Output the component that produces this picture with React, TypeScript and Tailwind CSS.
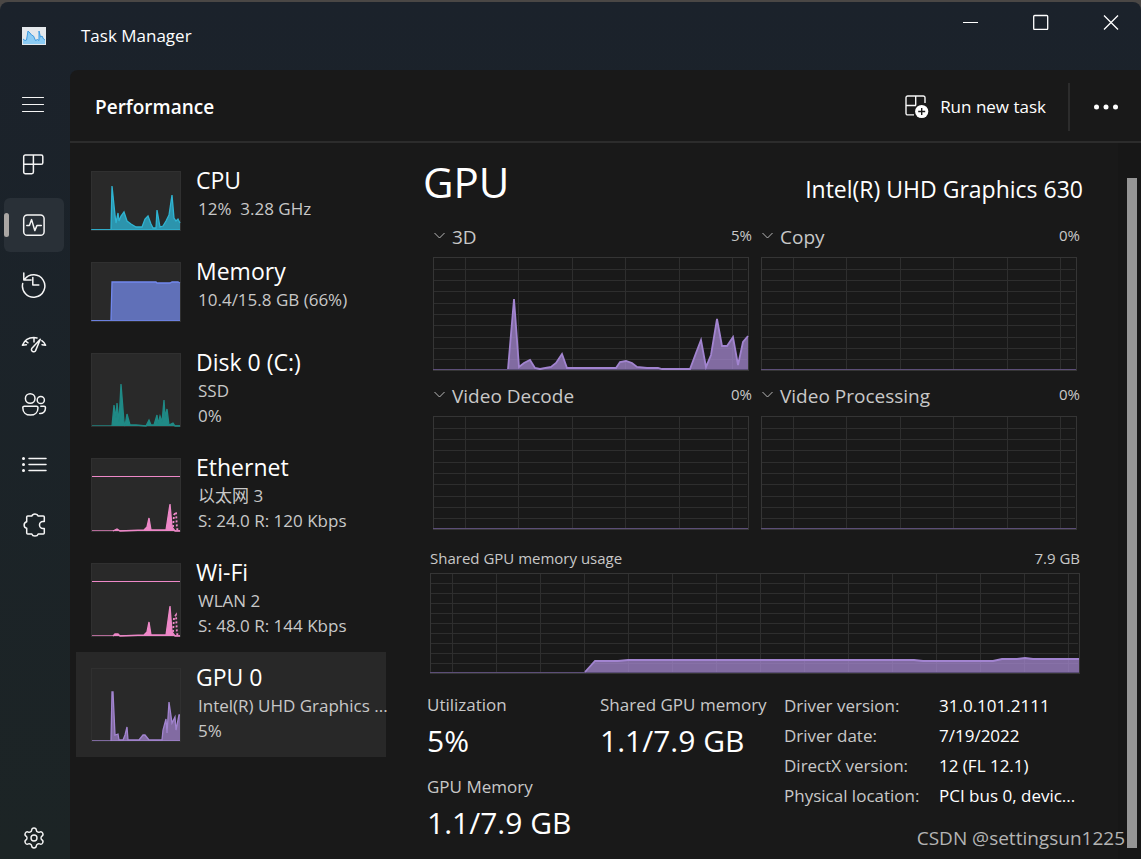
import React from 'react';
import { Settings } from 'lucide-react';

type Point = [number, number];

interface Resource {
  name: string;
  lines: string[];
  height: number;
  stroke: string;
  fill: string;
  points: Point[];
  dotted?: string;
  limit?: number;
}

const resources: Resource[] = [
  {
    name: 'CPU',
    lines: ['12%  3.28 GHz'],
    height: 60,
    stroke: '#2fb4d2',
    fill: '#2c94ad',
    points: [[0, 58], [20, 58], [21, 15], [24, 44], [25, 52], [27, 42], [28, 50], [30, 45], [33, 41], [36, 50], [40, 53], [45, 56], [51, 56], [54, 48], [57, 45], [60, 53], [62, 57], [65, 57], [66, 39], [69, 56], [72, 55], [75, 50], [78, 44], [81, 24], [83, 47], [85, 50], [87, 48], [89, 52]],
  },
  {
    name: 'Memory',
    lines: ['10.4/15.8 GB (66%)'],
    height: 60,
    stroke: '#7288ee',
    fill: '#6070b8',
    points: [[0, 58], [20, 58], [21, 20], [65, 20], [66, 21], [79, 21], [81, 20], [87, 20], [89, 21]],
  },
  {
    name: 'Disk 0 (C:)',
    lines: ['SSD', '0%'],
    height: 74,
    stroke: '#1f8a86',
    fill: '#208a86',
    points: [[0, 73], [21, 73], [23, 52], [25, 65], [26, 50], [28, 69], [30, 31], [33, 69], [34, 73], [36, 61], [39, 72], [45, 72], [55, 73], [58, 67], [60, 72], [63, 72], [66, 62], [67, 71], [69, 63], [71, 69], [73, 47], [74, 64], [76, 56], [78, 72], [82, 70], [84, 73], [89, 73]],
  },
  {
    name: 'Ethernet',
    lines: ['以太网 3', 'S: 24.0 R: 120 Kbps'],
    height: 74,
    stroke: '#ee88c8',
    fill: '#ee88c8',
    limit: 18,
    points: [[0, 73], [22, 73], [26, 71], [29, 73], [53, 72], [56, 69], [58, 60], [60, 72], [75, 72], [79, 46], [81, 69], [84, 73], [89, 73]],
    dotted: '82,69 83,57 85,54 86,71 88,72',
  },
  {
    name: 'Wi-Fi',
    lines: ['WLAN 2', 'S: 48.0 R: 144 Kbps'],
    height: 74,
    stroke: '#ee88c8',
    fill: '#ee88c8',
    limit: 18,
    points: [[0, 73], [22, 73], [24, 71], [27, 71], [29, 73], [53, 72], [56, 69], [58, 59], [60, 72], [75, 72], [79, 43], [81, 69], [84, 73], [89, 73]],
    dotted: '82,69 83,55 85,52 86,71 88,72',
  },
  {
    name: 'GPU 0',
    lines: ['Intel(R) UHD Graphics ...', '5%'],
    height: 74,
    stroke: '#a284d0',
    fill: '#826ba2',
    points: [[0, 73], [20, 73], [21, 24], [22, 24], [24, 67], [27, 66], [28, 72], [32, 72], [34, 67], [36, 59], [37, 72], [48, 72], [52, 67], [54, 67], [58, 72], [71, 72], [72, 62], [75, 51], [76, 65], [78, 34], [81, 55], [84, 49], [85, 62], [88, 47], [89, 47]],
  },
];

const gpu3d: Point[] = [[0, 112], [75, 112], [81, 42], [86, 110], [91, 106], [97, 103], [102, 111], [107, 112], [118, 110], [123, 106], [129, 97], [134, 111], [183, 111], [187, 105], [193, 104], [199, 106], [204, 110], [214, 111], [225, 111], [229, 112], [257, 112], [263, 96], [268, 83], [273, 110], [278, 98], [284, 62], [289, 89], [294, 89], [300, 80], [305, 108], [310, 85], [315, 79]];
const idle: Point[] = [[0, 112], [315, 112]];
const sharedMemory: Point[] = [[0, 99], [155, 99], [165, 88], [188, 88], [198, 87], [484, 87], [493, 88], [563, 88], [572, 86], [587, 86], [595, 85], [603, 86], [649, 86]];

const engines = [
  { name: '3D', value: '5%', points: gpu3d },
  { name: 'Copy', value: '0%', points: idle },
  { name: 'Video Decode', value: '0%', points: idle },
  { name: 'Video Processing', value: '0%', points: idle },
];

const engineCols = [32, 85, 139, 192, 246, 299];
const engineRows = [12, 23, 34, 46, 57, 68, 80, 91, 102];
const memoryCols = [22, 66, 110, 154, 198, 242, 286, 330, 374, 418, 462, 506, 550, 594, 638];
const memoryRows = [10, 20, 30, 40, 50, 60, 70, 80, 90];

const driver = [
  ['Driver version:', '31.0.101.2111'],
  ['Driver date:', '7/19/2022'],
  ['DirectX version:', '12 (FL 12.1)'],
  ['Physical location:', 'PCI bus 0, devic...'],
];

const areaOf = (points: Point[], bottom: number) => {
  const last = points[points.length - 1];
  return `${points.map((p) => p.join(',')).join(' ')} ${last[0]},${bottom} 0,${bottom}`;
};

interface UsageChartProps {
  label: string;
  width: number;
  height: number;
  cols: number[];
  rows: number[];
  points: Point[];
  className: string;
}

const UsageChart: React.FC<UsageChartProps> = ({ label, width, height, cols, rows, points, className }) => (
  <svg className={className} viewBox={`0 0 ${width} ${height}`} preserveAspectRatio="none" role="img" aria-label={label}>
    <g stroke="#2e2e2e" fill="none">
      {cols.map((x) => <path key={`c${x}`} d={`M${x + 0.5} 0V${height}`} />)}
      {rows.map((y) => <path key={`r${y}`} d={`M0 ${y + 0.5}H${width - 2}`} />)}
      <rect x="0.5" y="0.5" width={width - 1} height={height - 1} stroke="#353535" />
    </g>
    <polygon points={areaOf(points, height - 1)} fill="#a98ad4" fillOpacity="0.73" />
    <path d={`M0 ${height - 1.5}H${width - 1}`} stroke="#5c4e78" fill="none" />
    {points.length > 2 && (
      <polyline points={points.slice(1).map((p) => p.join(',')).join(' ')} fill="none" stroke="#a284d0" strokeWidth="1.8" />
    )}
  </svg>
);

const Thumbnail: React.FC<{ item: Resource }> = ({ item }) => (
  <svg className="mt-4 mb-[15px] shrink-0" width="90" height={item.height} viewBox={`0 0 90 ${item.height}`} aria-hidden="true">
    <rect x="0.5" y="0.5" width="89" height={item.height - 1} fill="#292929" stroke="#303030" />
    {item.limit && <path d={`M1 ${item.limit + 0.5}H89`} stroke={item.stroke} />}
    <polygon points={areaOf(item.points, item.height - 1)} fill={item.fill} />
    <polyline points={item.points.slice(1).map((p) => p.join(',')).join(' ')} fill="none" stroke={item.stroke} strokeWidth="1.3" />
    <path d={`M1 ${item.height - 1.5}H89`} stroke={item.stroke} strokeOpacity="0.7" />
    {item.dotted && <polyline points={item.dotted} fill="none" stroke={item.stroke} strokeWidth="1.8" strokeDasharray="2 2" />}
  </svg>
);

const Icon: React.FC<{ children: React.ReactNode }> = ({ children }) => (
  <svg width="26" height="26" viewBox="0 0 26 26" fill="none" stroke="#f5f5f5" strokeWidth="1.5" strokeLinecap="round" strokeLinejoin="round" aria-hidden="true">
    {children}
  </svg>
);

const navItems = [
  { label: 'Open navigation', icon: <Icon><path strokeWidth="1.2" d="M1.5 5.5h21M1.5 12.5h21M1.5 19.500h21" /></Icon> },
  { label: 'Processes', icon: <Icon><path d="M4.3 3h15.9a1.6 1.6 0 0 1 1.6 1.6v6.100a1.6 1.6 0 0 1-1.6 1.6h-7.8v7.800a1.6 1.6 0 0 1-1.6 1.6H4.3a1.6 1.6 0 0 1-1.6-1.6V4.600A1.6 1.6 0 0 1 4.3 3zM12.4 3v9.300M2.7 12.300h9.700" /></Icon> },
  { label: 'Performance', icon: <Icon><rect x="2.7" y="2.9" width="20.4" height="20.4" rx="3.6" /><path d="M5.8 13.6h2.6l2.2-6 3.2 11 2.1-5h4.4" /></Icon> },
  { label: 'App history', icon: <Icon><path d="M2.8 1v7h7.3M3.6 7.4A11.2 11.2 0 1 1 1.7 11.6M11.8 5.500v7.400h6" /></Icon> },
  { label: 'Startup apps', icon: <Icon><path d="M1.4 13.2C3.6 8.2 8 5.6 12.8 5.6c1.2 0 2.2.1 3.2.4M20.8 8.6c1.8 1.2 3 2.8 3.8 4.6M1.4 13.2l4-.4M24.6 13.2l-3.6-.5M5 9.4l2 1.4M13 6v4" /><path d="M19.3 7.2 14.7 18.4a2.2 2.2 0 1 1-4-1.8z" /></Icon> },
  { label: 'Users', icon: <Icon><circle cx="9.2" cy="6.5" r="4.8" /><circle cx="19.8" cy="8" r="3.6" /><path d="M3.3 14.2h12.2a1.5 1.5 0 0 1 1.5 1.5c0 4.6-3.2 7.4-7.6 7.4s-7.6-2.8-7.6-7.4a1.5 1.5 0 0 1 1.5-1.5zM19.8 14.2h3.2a1.5 1.5 0 0 1 1.5 1.5c0 4-2.6 6-5.8 5.8" /></Icon> },
  { label: 'Details', icon: <Icon><path d="M8 6.5h17M8 12.5h17M8 18.5h17" /><path strokeWidth="3" d="M2.5 6.5h.01M2.5 12.5h.01M2.5 18.5h.01" /></Icon> },
  { label: 'Services', icon: <Icon><path d="M6.7 4h4.1a3.3 2.7 0 0 1 6.4 0h5.1a1 1 0 0 1 1 1v4.6h-1.4a3.4 3.4 0 0 0 0 6.8h1.4V21a1 1 0 0 1-1 1h-5.1a3.3 2.7 0 0 1-6.4 0H6.7a1 1 0 0 1-1-1v-4.7a3.4 3.4 0 0 1 0-6.6V5a1 1 0 0 1 1-1z" /></Icon> },
];

const Sidebar = () => (
  <nav className="flex w-[70px] shrink-0 flex-col gap-1.5 pt-2 pl-1" aria-label="Pages">
    {navItems.map((item) =>
      item.label === 'Performance' ? (
        <button key={item.label} type="button" aria-label={item.label} aria-current="page" className="relative flex h-[54px] w-[60px] items-center justify-center rounded-md bg-[#293037]">
          <span className="absolute top-[15px] left-0 h-6 w-[5px] rounded-full bg-[#aaa6a3]" />
          {item.icon}
        </button>
      ) : (
        <button key={item.label} type="button" aria-label={item.label} className="flex h-[54px] w-[60px] items-center justify-center rounded-md">
          {item.icon}
        </button>
      )
    )}
    <button type="button" aria-label="Settings" className="mt-auto flex h-[42px] w-[60px] items-center justify-center text-[#f5f5f5]">
      <Settings size={24} strokeWidth={1.4} />
    </button>
  </nav>
);

const TitleBar = () => (
  <header className="flex h-[68px] shrink-0 justify-between pr-[22px] pl-[22px]">
    <div className="flex items-center gap-[35px]">
      <svg width="24" height="18" viewBox="0 0 24 18" aria-hidden="true">
        <rect width="24" height="18" fill="#e4e8ec" />
        <path d="M1 17v-5l2 1.5 1.500-.5L6 4l2 2 1.500 2 2 1 2 4.500 2-1 1.500 1L17 4l1.500 6 1.500-1 1.500 3 1.500 1v4z" fill="#8ccbf3" />
        <path d="M1 12l2 1.500 1.500-.5L6 4l2 2 1.500 2 2 1 2 4.500 2-1 1.500 1L17 4l1.500 6 1.500-1 1.500 3 1.500 1" fill="none" stroke="#3c9be2" />
      </svg>
      <h1 className="text-[17px] leading-6">Task Manager</h1>
    </div>
    <div className="flex items-start gap-[54px] pt-3">
      <button type="button" aria-label="Minimize">
        <svg width="16" height="16" viewBox="0 0 16 16" fill="none" stroke="#ffffff" aria-hidden="true"><path d="M0 8.5h15" /></svg>
      </button>
      <button type="button" aria-label="Maximize">
        <svg width="16" height="16" viewBox="0 0 16 16" fill="none" stroke="#ffffff" strokeWidth="1.3" aria-hidden="true"><rect x="0.7" y="1.5" width="14" height="14" rx="1" /></svg>
      </button>
      <button type="button" aria-label="Close">
        <svg width="16" height="16" viewBox="0 0 16 16" fill="none" stroke="#ffffff" strokeWidth="1.3" aria-hidden="true"><path d="M1 1.500l14 14M15 1.500l-14 14" /></svg>
      </button>
    </div>
  </header>
);

const Toolbar = () => (
  <div className="flex h-[73px] shrink-0 items-center border-b-2 border-[#2c2c2c] pt-0.5 pr-[23px] pl-[25px]">
    <h2 className="mr-auto text-[19px] leading-7 font-semibold">Performance</h2>
    <button type="button" className="flex items-center gap-[11px] text-[17px] leading-6">
      <svg width="24" height="24" viewBox="0 0 24 24" fill="none" stroke="#f5f5f5" strokeWidth="1.4" aria-hidden="true">
        <path d="M20 8V2.700A1.700 1.700 0 0 0 18.300 1H2.700A1.700 1.700 0 0 0 1 2.700v15.500a1.700 1.700 0 0 0 1.700 1.700H9M10.700 1v9.500M1 10.500h10" />
        <circle cx="16.7" cy="16.5" r="6.6" fill="#ffffff" stroke="none" />
        <path d="M16.7 13v7M13.2 16.5h7" stroke="#191919" />
      </svg>
      Run new task
    </button>
    <span className="mr-6 ml-[22px] h-12 w-0.5 bg-[#2c2c2c]" />
    <button type="button" aria-label="See more">
      <svg width="24" height="6" viewBox="0 0 24 6" fill="#ffffff" aria-hidden="true">
        <circle cx="2.5" cy="3" r="2.5" /><circle cx="12" cy="3" r="2.5" /><circle cx="21.5" cy="3" r="2.5" />
      </svg>
    </button>
  </div>
);

const ResourceList = () => (
  <ul className="w-[310px] shrink-0">
    {resources.map((item) => (
      <li key={item.name} className={item.name === 'GPU 0' ? 'bg-[#282828]' : ''}>
        <button type="button" className="flex w-full items-start gap-[15px] pl-[15px] text-left">
          <Thumbnail item={item} />
          <span className="flex min-w-0 flex-1 flex-col pt-3">
            <span className="mb-[3px] text-[23px] leading-[26px]">{item.name}</span>
            {item.lines.map((line) => (
              <span key={line} className="pl-0.5 text-[17px] leading-[25px] whitespace-pre text-[#c8c8c8]">{line}</span>
            ))}
          </span>
        </button>
      </li>
    ))}
  </ul>
);

const Stat: React.FC<{ label: string; value: string }> = ({ label, value }) => (
  <div>
    <dt className="text-[17px] leading-7 whitespace-nowrap text-[#c8c8c8]">{label}</dt>
    <dd className="text-[30px] leading-[44px] whitespace-nowrap">{value}</dd>
  </div>
);

const GpuDetails = () => (
  <section className="min-w-0 flex-1 pr-[41px] pl-[47px]">
    <div className="-mr-1.5 -ml-[10px] flex h-[68px] items-baseline justify-between">
      <h3 className="text-[42px] leading-[54px]">GPU</h3>
      <p className="text-[23px] leading-8">Intel(R) UHD Graphics 630</p>
    </div>
    <div className="grid grid-cols-2 gap-x-3">
      {engines.map((engine) => (
        <div key={engine.name}>
          <div className="-mr-[3px] flex h-[34px] items-start justify-between text-[#c8c8c8]">
            <button type="button" className="flex items-center gap-1.5 text-[19px] leading-7">
              <svg width="13" height="12" viewBox="0 0 13 12" fill="none" stroke="#b8b8b8" aria-hidden="true"><path d="M1.5 2l5 5 5-5" /></svg>
              {engine.name}
            </button>
            <span className="text-[15px] leading-6">{engine.value}</span>
          </div>
          <UsageChart label={`${engine.name} usage`} width={316} height={114} cols={engineCols} rows={engineRows} points={engine.points} className="mb-[11px] block h-[114px] w-full" />
        </div>
      ))}
    </div>
    <div className="-mx-[3px]">
      <div className="flex h-8 items-end justify-between pb-[3px] text-[15px] leading-6 text-[#c8c8c8]">
        <span>Shared GPU memory usage</span>
        <span>7.9 GB</span>
      </div>
      <UsageChart label="Shared GPU memory usage" width={650} height={101} cols={memoryCols} rows={memoryRows} points={sharedMemory} className="block h-[101px] w-full" />
    </div>
    <div className="-ml-1.5 flex pt-[17px]">
      <dl className="grid w-[357px] shrink-0 grid-cols-[173px_1fr] gap-y-2.5">
        <Stat label="Utilization" value="5%" />
        <Stat label="Shared GPU memory" value="1.1/7.9 GB" />
        <Stat label="GPU Memory" value="1.1/7.9 GB" />
      </dl>
      <dl className="min-w-0 flex-1 text-[17px] leading-[30px]">
        {driver.map(([label, value]) => (
          <div key={label} className="flex">
            <dt className="w-[155px] shrink-0 text-[#c8c8c8]">{label}</dt>
            <dd className="whitespace-nowrap">{value}</dd>
          </div>
        ))}
      </dl>
    </div>
  </section>
);

const App: React.FC = () => (
  <div className="min-h-screen bg-[#4a4745] pt-0.5 font-['Open_Sans','Noto_Sans_CJK_SC',sans-serif] text-white">
    <div className="relative flex min-h-[calc(100vh-2px)] flex-col rounded-t-lg bg-linear-to-b from-[#1b222b] to-[#1c2425]">
      <TitleBar />
      <div className="flex flex-1">
        <Sidebar />
        <main className="flex min-w-0 flex-1 flex-col rounded-tl-lg bg-[#191919]">
          <Toolbar />
          <div className="flex flex-1 pl-1.5">
            <div className="flex min-w-0 flex-1 pt-3">
              <ResourceList />
              <GpuDetails />
            </div>
            <div className="flex w-[23px] shrink-0 bg-[#171717] pt-[35px] pr-1 pb-[11px] pl-[9px]">
              <div className="flex-1 bg-[#959595]" />
            </div>
          </div>
        </main>
      </div>
      <span className="absolute right-4 bottom-[9px] text-[19px] leading-6 text-[#b4b4b4]">CSDN @settingsun1225</span>
    </div>
  </div>
);

export default App;
